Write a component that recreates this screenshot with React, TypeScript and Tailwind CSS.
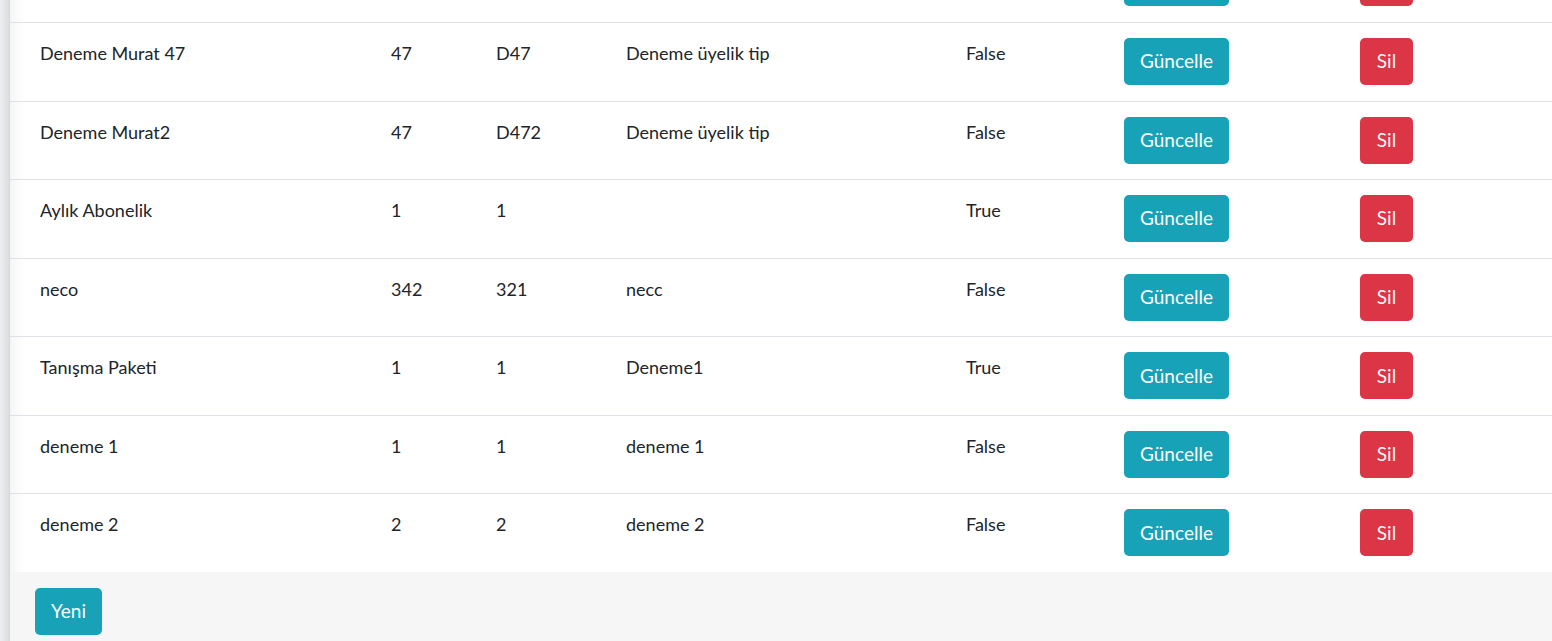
import React from "react";

const rows = [
  { name: "", a: "", b: "", type: "", active: "" },
  { name: "Deneme Murat 47", a: "47", b: "D47", type: "Deneme üyelik tip", active: "False" },
  { name: "Deneme Murat2", a: "47", b: "D472", type: "Deneme üyelik tip", active: "False" },
  { name: "Aylık Abonelik", a: "1", b: "1", type: "", active: "True" },
  { name: "neco", a: "342", b: "321", type: "necc", active: "False" },
  { name: "Tanışma Paketi", a: "1", b: "1", type: "Deneme1", active: "True" },
  { name: "deneme 1", a: "1", b: "1", type: "deneme 1", active: "False" },
  { name: "deneme 2", a: "2", b: "2", type: "deneme 2", active: "False" },
];

// the first row is scrolled off the top, only its buttons' bottoms show
function Row({ row, first }: { row: typeof rows[0]; first: boolean }) {
  return (
    <div
      className={`grid grid-cols-[381px_105px_130px_340px_158px_236px_1fr] h-[78.57px] box-border border-[#dee2e6] ${
        first ? "-mt-[56.57px]" : "border-t"
      }`}
    >
      <div className="pl-[30px] pt-[17px] leading-[27px]">{row.name}</div>
      <div className="pt-[17px] leading-[27px]">{row.a}</div>
      <div className="pt-[17px] leading-[27px]">{row.b}</div>
      <div className="pt-[17px] leading-[27px]">{row.type}</div>
      <div className="pt-[17px] leading-[27px]">{row.active}</div>
      <div className={first ? "pt-[16px]" : "pt-[15px]"}>
        <button className="h-[47px] w-[105px] rounded-[5px] bg-[#17a2b8] text-[#fbfdfe] text-[19px]">
          {!first && "Güncelle"}
        </button>
      </div>
      <div className={first ? "pt-[16px]" : "pt-[15px]"}>
        <button className="h-[47px] w-[53px] rounded-[5px] bg-[#dc3545] text-[#fdf8f8] text-[19px]">
          {!first && "Sil"}
        </button>
      </div>
    </div>
  );
}

export default function App() {
  return (
    <div className="flex h-[641px] overflow-hidden bg-white text-[#212529] text-[18px] font-['Lato','Noto_Sans',sans-serif]">
      <div className="w-[10px] shrink-0 bg-gradient-to-r from-[#eceef0] to-[#dcdde1] border-r border-[#d6d7db]" />
      <div className="flex-1 flex flex-col shadow-[inset_14px_0_14px_-10px_rgba(0,0,0,0.06)]">
        <div className="flex flex-col">
          {rows.map((row, i) => (
            <Row key={i} row={row} first={i === 0} />
          ))}
        </div>
        <div className="flex-1 bg-[#f6f6f6] pl-[25px] pt-[16px]">
          <button className="h-[47px] w-[67px] rounded-[5px] bg-[#17a2b8] text-[#fbfdfe] text-[19px]">
            Yeni
          </button>
        </div>
      </div>
    </div>
  );
}
